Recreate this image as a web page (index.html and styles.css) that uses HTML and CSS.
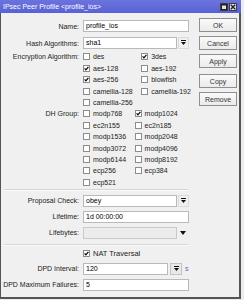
FILE: index.html
```html
<!DOCTYPE html>
<html lang="en">
<head>
    <meta charset="UTF-8">
    <title>IPsec Peer Profile</title>
    <link rel="stylesheet" href="styles.css">
</head>
<body>
    <div class="window">
        <div class="titlebar">
            <span class="title">IPsec Peer Profile &lt;profile_ios&gt;</span>
            <span class="win-btns">
                <span class="win-btn">
                    <svg width="6" height="6" viewBox="0 0 6 6"><rect x="0.5" y="0.5" width="5" height="5" fill="none" stroke="#222" stroke-width="1"/><rect x="0" y="0" width="6" height="1.5" fill="#222"/></svg>
                </span>
                <span class="win-btn">
                    <svg width="6" height="6" viewBox="0 0 6 6"><path d="M0.8 0.8 L5.2 5.2 M5.2 0.8 L0.8 5.2" stroke="#222" stroke-width="1.4"/></svg>
                </span>
            </span>
        </div>

        <div class="content">
            <div class="form">
                <div class="row row-name">
                    <span class="label">Name:</span>
                    <div class="input full">profile_ios</div>
                </div>

                <div class="row row-hash">
                    <span class="label">Hash Algorithms:</span>
                    <div class="input short">sha1</div>
                    <span class="drop-btn">
                        <svg width="5" height="6" viewBox="0 0 5 6"><rect x="0" y="0" width="5" height="1" fill="#111"/><polygon points="0,2 5,2 2.5,5" fill="#111"/></svg>
                    </span>
                </div>

                <div class="group group-enc">
                    <span class="label">Encryption Algorithm:</span>
                    <div class="checks">
                        <div class="check"><span class="box"></span>des</div>
                        <div class="check"><span class="box on"></span>3des</div>
                        <div class="check"><span class="box on"></span>aes-128</div>
                        <div class="check"><span class="box"></span>aes-192</div>
                        <div class="check"><span class="box on"></span>aes-256</div>
                        <div class="check"><span class="box"></span>blowfish</div>
                        <div class="check"><span class="box"></span>camellia-128</div>
                        <div class="check"><span class="box"></span>camellia-192</div>
                        <div class="check"><span class="box"></span>camellia-256</div>
                    </div>
                </div>

                <div class="group group-dh">
                    <span class="label">DH Group:</span>
                    <div class="checks">
                        <div class="check"><span class="box"></span>modp768</div>
                        <div class="check"><span class="box on"></span>modp1024</div>
                        <div class="check"><span class="box"></span>ec2n155</div>
                        <div class="check"><span class="box"></span>ec2n185</div>
                        <div class="check"><span class="box"></span>modp1536</div>
                        <div class="check"><span class="box"></span>modp2048</div>
                        <div class="check"><span class="box"></span>modp3072</div>
                        <div class="check"><span class="box"></span>modp4096</div>
                        <div class="check"><span class="box"></span>modp6144</div>
                        <div class="check"><span class="box"></span>modp8192</div>
                        <div class="check"><span class="box"></span>ecp256</div>
                        <div class="check"><span class="box"></span>ecp384</div>
                        <div class="check"><span class="box"></span>ecp521</div>
                    </div>
                </div>

                <div class="separator sep-1"></div>

                <div class="row row-proposal">
                    <span class="label">Proposal Check:</span>
                    <div class="input short">obey</div>
                    <span class="drop-btn">
                        <svg width="5" height="6" viewBox="0 0 5 6"><rect x="0" y="0" width="5" height="1" fill="#111"/><polygon points="0,2 5,2 2.5,5" fill="#111"/></svg>
                    </span>
                </div>

                <div class="row row-lifetime">
                    <span class="label">Lifetime:</span>
                    <div class="input full">1d 00:00:00</div>
                </div>

                <div class="row row-lifebytes">
                    <span class="label">Lifebytes:</span>
                    <div class="input short disabled"></div>
                    <span class="drop-plain">
                        <svg width="6" height="4" viewBox="0 0 6 4"><polygon points="0,0 6,0 3,4" fill="#111"/></svg>
                    </span>
                </div>

                <div class="separator sep-2"></div>

                <div class="group group-nat">
                    <span class="label"></span>
                    <div class="check big"><span class="box on"></span>NAT Traversal</div>
                </div>

                <div class="row row-dpd">
                    <span class="label">DPD Interval:</span>
                    <div class="input dpd">120</div>
                    <span class="drop-btn boxed">
                        <svg width="5" height="6" viewBox="0 0 5 6"><rect x="0" y="0" width="5" height="1" fill="#111"/><polygon points="0,2 5,2 2.5,5" fill="#111"/></svg>
                    </span>
                    <span class="unit">s</span>
                </div>

                <div class="row row-dpd-max">
                    <span class="label">DPD Maximum Failures:</span>
                    <div class="input full">5</div>
                </div>
            </div>

            <div class="buttons">
                <button class="btn">OK</button>
                <button class="btn">Cancel</button>
                <button class="btn">Apply</button>
                <button class="btn btn-copy">Copy</button>
                <button class="btn">Remove</button>
            </div>
        </div>
    </div>
</body>
</html>
```

FILE: styles.css
```css
body {
    margin: 0;
    background-color: #ececec;
    font-family: "Liberation Sans", Arial, sans-serif;
    font-size: 7px;
    color: #222;
}
.window {
    width: 241px;
    height: 299px;
    display: flex;
    flex-direction: column;
}
.titlebar {
    height: 13px;
    flex: none;
    display: flex;
    align-items: center;
    justify-content: space-between;
    padding: 0 4px 0 3px;
    background: linear-gradient(#6b73dd, #5962d4);
    color: white;
}
.title {
    font-size: 7px;
}
.win-btns {
    display: flex;
    gap: 1px;
}
.win-btn {
    width: 8px;
    height: 8px;
    box-sizing: border-box;
    border: 1px solid #3a3a3a;
    background-color: #e2e2e2;
    display: flex;
    align-items: center;
    justify-content: center;
}
.content {
    flex: 1;
    display: flex;
    background-color: #f0f0f0;
    border-left: 1px solid #555;
    border-right: 2px solid #555;
    border-bottom: 2px solid #555;
}
.form {
    width: 188px;
    padding-top: 7px;
    display: flex;
    flex-direction: column;
}
.label {
    width: 78px;
    flex: none;
    text-align: right;
    padding-right: 4px;
    white-space: nowrap;
}
.row {
    height: 12px;
    display: flex;
    align-items: center;
    margin-top: 4px;
}
.row-name {
    margin-top: 0;
}
.row-hash {
    margin-top: 5px;
}
.input {
    height: 12px;
    box-sizing: border-box;
    border: 1px solid #b9b9b9;
    background-color: white;
    color: #000;
    padding: 0 2px;
    line-height: 10px;
    white-space: nowrap;
}
.input.full {
    width: 106px;
}
.input.short {
    width: 94px;
}
.input.dpd {
    width: 85px;
}
.input.disabled {
    background-color: #ececec;
    border-color: #c9c9c9;
}
.drop-btn {
    width: 11px;
    height: 12px;
    margin-left: 1px;
    box-sizing: border-box;
    border: 1px solid #dadada;
    display: flex;
    align-items: center;
    justify-content: center;
}
.drop-btn.boxed {
    width: 12px;
    margin-left: 2px;
    border-color: #c4c4c4;
    background-color: #e8e8e8;
}
.drop-plain {
    width: 12px;
    display: flex;
    justify-content: center;
}
.unit {
    margin-left: 3px;
    color: #5b6aa8;
}
.group {
    display: flex;
    align-items: flex-start;
}
.group .label {
    line-height: 11.4px;
}
.group-enc {
    margin-top: 2.3px;
}
.checks {
    display: grid;
    grid-template-columns: auto auto;
    grid-auto-rows: 11.4px;
    column-gap: 8.5px;
    justify-content: start;
}
.check {
    display: flex;
    align-items: center;
    gap: 3px;
    height: 11.4px;
    white-space: nowrap;
}
.check.big {
    font-size: 7.5px;
}
.box {
    width: 7px;
    height: 7px;
    box-sizing: border-box;
    border: 1px solid #8c8c8c;
    background-color: white;
    flex: none;
}
.box.on {
    background: white url("data:image/svg+xml;utf8,<svg xmlns='http://www.w3.org/2000/svg' width='5' height='5' viewBox='0 0 5 5'><polyline points='0.6,2.4 1.9,3.8 4.4,0.8' fill='none' stroke='black' stroke-width='1.2'/></svg>") center / 5px 5px no-repeat;
}
.separator {
    margin-left: 3px;
    width: 184px;
    border-top: 1px solid #d6d6d6;
    border-bottom: 1px solid #fafafa;
    height: 0;
}
.sep-1 {
    margin-top: 1px;
}
.sep-2 {
    margin-top: 5px;
}
.group-nat {
    margin-top: 2.3px;
}
.row-dpd {
    margin-top: 3.3px;
}
.buttons {
    margin-left: 10px;
    padding-top: 5px;
    display: flex;
    flex-direction: column;
    gap: 4px;
}
.btn {
    width: 38px;
    height: 14px;
    padding: 0;
    font-family: "Liberation Sans", Arial, sans-serif;
    font-size: 7px;
    color: #333;
    background: linear-gradient(#fafafa, #ebebeb);
    border: 1px solid #8f8f8f;
    border-radius: 0;
}
.btn-copy {
    margin-top: 2px;
}
```
